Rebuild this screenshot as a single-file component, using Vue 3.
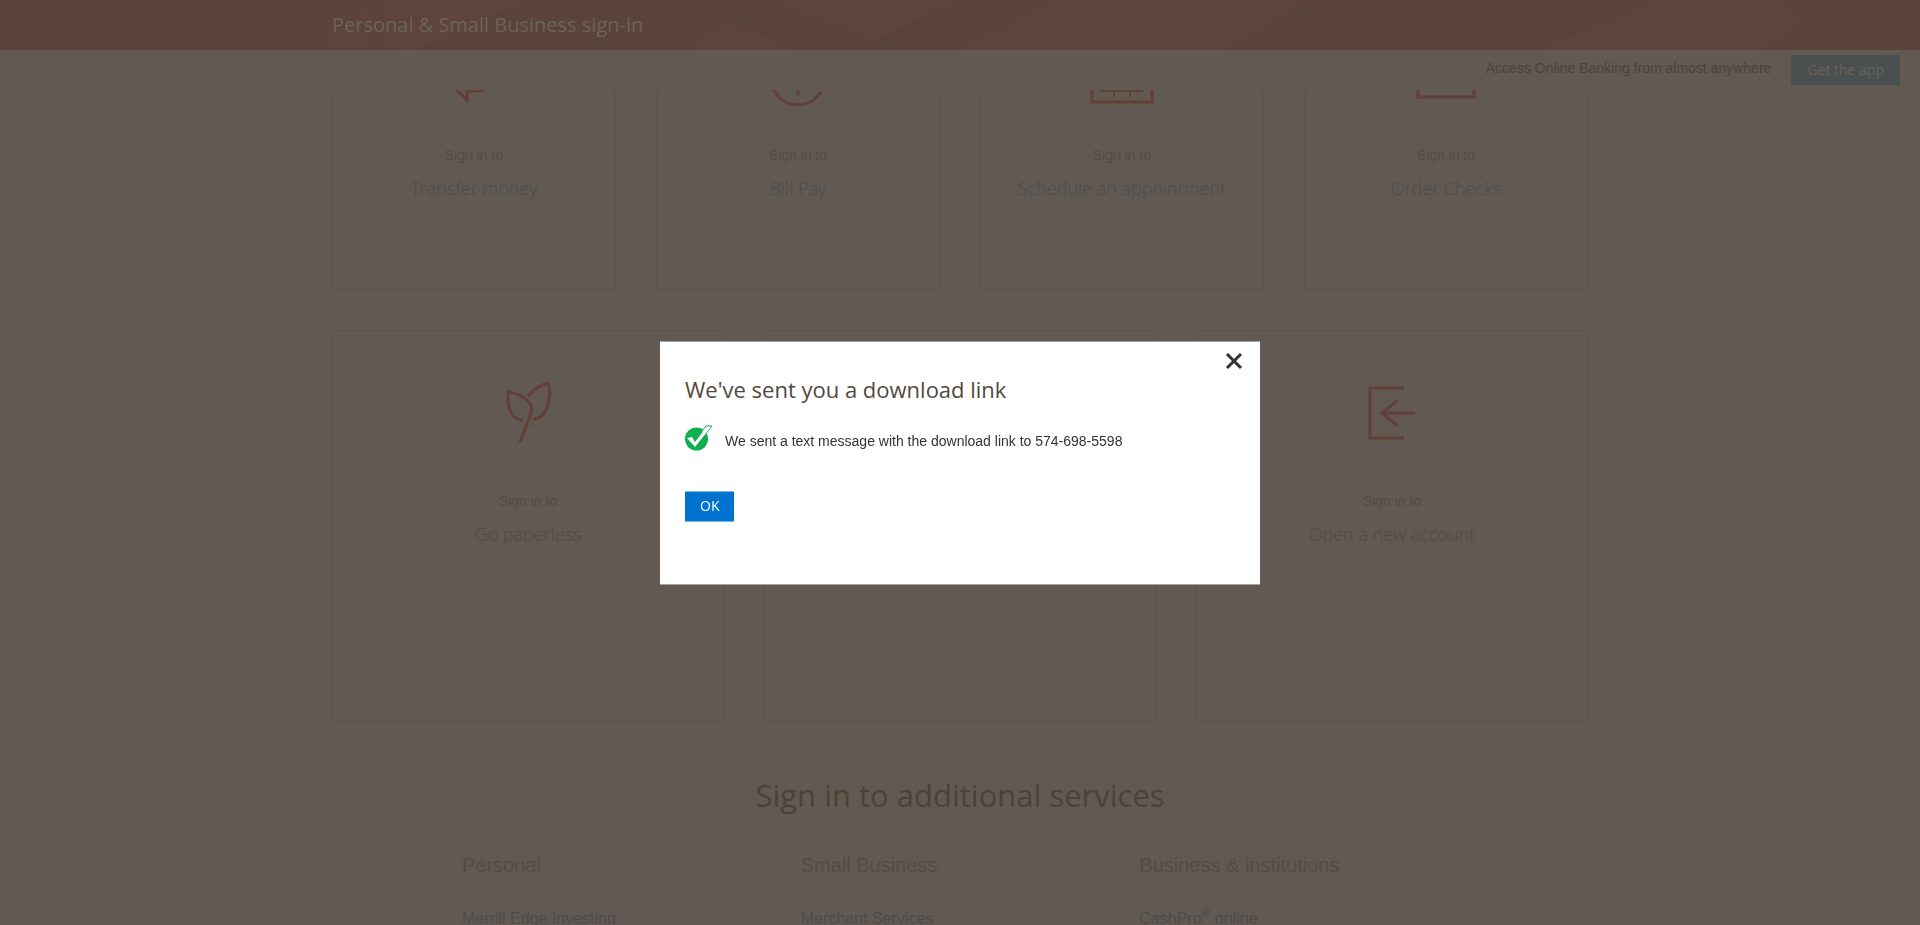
<script setup>
import { ref } from 'vue'

const open = ref(true)

const quickLinks = [
  { name: 'Transfer money', icon: 'transfer' },
  { name: 'Bill Pay', icon: 'bill' },
  { name: 'Schedule an appointment', icon: 'calendar' },
  { name: 'Order Checks', icon: 'checks' },
]

const moreLinks = [
  { name: 'Go paperless', icon: 'leaf' },
  { name: '', icon: '' },
  { name: 'Open a new account', icon: 'enter' },
]

const rows = [
  { id: 'quick', cards: quickLinks },
  { id: 'more', cards: moreLinks },
]

const services = [
  { title: 'Personal', link: 'Merrill Edge Investing' },
  { title: 'Small Business', link: 'Merchant Services' },
  { title: 'Business & institutions', link: 'CashPro', mark: '®', tail: ' online' },
]
</script>

<template>
  <div class="page">
    <div class="top">
      <header class="masthead">
        <svg class="facets" viewBox="0 0 1920 50" preserveAspectRatio="none" aria-hidden="true">
          <defs>
            <linearGradient id="fade" x1="0" x2="1">
              <stop offset="0" stop-color="#5b443c" />
              <stop offset="0.6" stop-color="#5f433e" />
            </linearGradient>
          </defs>
          <rect width="1920" height="50" fill="#5b433d" />
          <path class="warm" d="M270 0H677L799 50H183Z" />
          <path d="M375 0H531L417 50H270Z" fill="url(#fade)" />
          <path d="M531 0H670L580 50H417Z" fill="#5b433d" />
          <path class="red" d="M723 22L799 50H689Z" />
          <path class="red" d="M767 0H963L902 27L875 41Z" />
          <path class="red" d="M1056 0H1308L1228 50H955Z" />
          <path class="warm" d="M1308 0H1472L1383 50H1228Z" />
          <path class="red" d="M1656 0H1780L1802 22L1763 50H1537Z" />
          <path class="warm" d="M1780 0L1889 50H1763L1802 22Z" />
        </svg>
        <h1>Personal &amp; Small Business sign-in</h1>
      </header>
      <div class="app-bar">
        <span>Access Online Banking from almost anywhere</span>
        <button type="button" class="get-app">Get the app</button>
      </div>
    </div>

    <main>
      <section v-for="row in rows" :key="row.id" class="cards" :class="row.id">
        <article v-for="card in row.cards" :key="card.icon" class="card">
          <template v-if="card.name">
            <svg class="icon" viewBox="0 0 80 80" aria-hidden="true">
              <g v-if="card.icon === 'transfer'">
                <path d="M50 65H33V74L6 48L33 22V31H74V50" />
              </g>
              <g v-else-if="card.icon === 'bill'">
                <path d="M63 66A27 27 0 1 1 67 52M40 34V69M48 42C44 36 32 38 32 45C32 53 46 50 47 58" />
              </g>
              <g v-else-if="card.icon === 'calendar'">
                <path d="M10 20H70V76H10ZM10 34H70M24 12V26M56 12V26" />
                <path class="thin" d="M19 65H61M32 42V71M48 42V71M19 52H61" />
              </g>
              <g v-else-if="card.icon === 'checks'">
                <path d="M12 30H68V71H12ZM22 42H48M22 54H40" />
              </g>
              <g v-else-if="card.icon === 'leaf'">
                <path d="M35 48C25 48 19 39 20 20C29 21 37 26 41 30C45 34 44 38 42 44L32 70" />
                <path d="M40 24C46 17 52 13 60 11C62 16 62 21 61 26C60 38 54 47 45 47" />
                <path class="mark" d="M42 52H44M45 52H46" />
              </g>
              <g v-else>
                <path d="M52 16H18V66H52M63 41H30M46 28L30 41L46 54" />
              </g>
            </svg>
            <p>Sign in to</p>
            <a href="#">{{ card.name }}</a>
          </template>
        </article>
      </section>

      <h2>Sign in to additional services</h2>
      <section class="services">
        <div v-for="service in services" :key="service.title">
          <h3>{{ service.title }}</h3>
          <a href="#">{{ service.link }}<sup v-if="service.mark">{{ service.mark }}</sup>{{ service.tail }}</a>
        </div>
      </section>
    </main>

    <div v-if="open" class="overlay">
      <div class="dialog" role="dialog" aria-modal="true" aria-labelledby="dialog-title">
        <button type="button" class="close" aria-label="Close" @click="open = false">
          <svg viewBox="0 0 18 18" aria-hidden="true"><path d="M2 2L16 16M16 2L2 16" /></svg>
        </button>
        <h2 id="dialog-title">We've sent you a download link</h2>
        <div class="message">
          <svg viewBox="0 0 29 26" aria-hidden="true">
            <circle cx="11.500" cy="14" r="11.500" fill="#0fae4f" />
            <path d="M17 6L21 1H27L20 10" fill="#fff" stroke="#0fae4f" />
            <path d="M2 13L7 12L10 17L20 4L25 3L10 22Z" fill="#fff" />
          </svg>
          <p>We sent a text message with the download link to 574-698-5598</p>
        </div>
        <button type="button" class="ok" @click="open = false">OK</button>
      </div>
    </div>
  </div>
</template>

<style>
body {
  margin: 0;
  background: #625952;
}
</style>

<style scoped>
.page {
  height: 100vh;
  overflow: hidden;
  background: #625952;
  color: #564c42;
  font-family: "Liberation Sans", Arial, sans-serif;
  font-size: 14px;
}

h1,
h2,
h3,
p {
  margin: 0;
  font-weight: 400;
}

a {
  color: #4b4d4e;
  text-decoration: none;
}

button {
  padding: 0;
  border: 0;
  border-radius: 0;
  cursor: pointer;
}

.top {
  position: fixed;
  inset: 0 0 auto;
  z-index: 1;
}

.masthead {
  position: relative;
  height: 50px;
}

.facets {
  position: absolute;
  inset: 0;
  width: 100%;
  height: 100%;
}

.facets .warm {
  fill: #5b443c;
}

.facets .red {
  fill: #5f433e;
}

h1 {
  position: relative;
  max-width: 1256px;
  margin: 0 auto;
  color: #6b6457;
  font: 400 20px/50px "Open Sans", sans-serif;
}

.app-bar {
  display: flex;
  align-items: center;
  justify-content: flex-end;
  gap: 20px;
  height: 40px;
  padding: 0 20px;
  background: #625952;
  color: #4d4238;
  line-height: 36px;
}

.app-bar span {
  padding-bottom: 4px;
}

.get-app {
  padding: 0 16px;
  background: #4a4f50;
  color: #6b6159;
  font: 400 14px/30px "Open Sans", sans-serif;
}

main {
  max-width: 1256px;
  margin: 0 auto;
  padding-top: 6px;
}

.cards {
  display: grid;
  grid-auto-columns: minmax(0, 1fr);
  grid-auto-flow: column;
  gap: 40px;
  margin-bottom: 40px;
}

.card {
  box-sizing: border-box;
  display: flex;
  flex-direction: column;
  align-items: center;
  width: 100%;
  aspect-ratio: 1;
  padding-top: 19px;
  border: 1px solid #5c534c;
}

.more .card {
  padding-top: 41px;
}

.icon {
  width: 80px;
  height: 80px;
  overflow: visible;
  fill: none;
  stroke: #633f39;
  stroke-width: 3;
}

.icon .thin {
  stroke-width: 2;
}

.icon .mark {
  stroke-width: 1;
}

.card p {
  margin-top: 39px;
  line-height: 20px;
}

.card a {
  margin-top: 9px;
  font: 300 18px/28px "Open Sans", sans-serif;
}

main h2 {
  margin-top: 53px;
  color: #4d4238;
  font: 400 31px/40px "Open Sans", sans-serif;
  text-align: center;
}

.services {
  display: grid;
  grid-template-columns: repeat(3, 1fr);
  gap: 20px;
  margin: 38px 130px 0;
}

h3 {
  margin-bottom: 30px;
  font-size: 20px;
  line-height: 24px;
}

.services a {
  display: block;
  font-size: 16px;
  line-height: 24px;
}

sup {
  font-size: 12px;
  line-height: 0;
}

.overlay {
  position: fixed;
  inset: 0;
  z-index: 2;
  display: flex;
  align-items: center;
  justify-content: center;
}

.dialog {
  box-sizing: border-box;
  position: relative;
  width: 600px;
  padding: 32px 25px 62px;
  border: solid #a8a39f;
  border-width: 1px 0;
  background: #fff;
  color: #333;
}

.close {
  position: absolute;
  top: 10px;
  right: 17px;
  width: 18px;
  height: 18px;
  background: none;
}

.close svg {
  display: block;
  fill: none;
  stroke: #333;
  stroke-width: 3;
}

.dialog h2 {
  color: #524940;
  font: 400 22px/30px "Open Sans", sans-serif;
}

.message {
  display: flex;
  gap: 11px;
  margin-top: 21px;
}

.message svg {
  width: 29px;
  height: 26px;
}

.message p {
  padding-top: 6px;
  line-height: 20px;
}

.ok {
  display: block;
  margin-top: 40px;
  padding: 0 15px 1px;
  border: solid #7db5e7;
  border-width: 1px 0;
  background: #0073cf;
  color: #fff;
  font: 400 14px/28px "Open Sans", sans-serif;
}
</style>
